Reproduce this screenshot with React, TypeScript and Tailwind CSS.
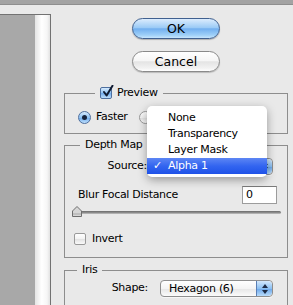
const font = "font-['DejaVu_Sans',sans-serif]";

function AquaStepper() {
  return (
    <span className="flex h-full w-[16px] flex-col items-center justify-center gap-[2px] rounded-r-[4px] border-l border-[#5a7fb5] bg-[linear-gradient(to_bottom,#d4e8fc_0%,#8cc0f2_50%,#6aa6ea_51%,#b9dcfb_100%)]">
      <svg width="6" height="4" viewBox="0 0 6 4">
        <path d="M3 0 L6 4 L0 4 Z" fill="#1d2b45" />
      </svg>
      <svg width="6" height="4" viewBox="0 0 6 4">
        <path d="M0 0 L6 0 L3 4 Z" fill="#1d2b45" />
      </svg>
    </span>
  );
}

function Popup({ value }: { value: string }) {
  return (
    <div className="flex h-[17px] w-[113px] overflow-hidden rounded-[4px] border border-[#8e8e8e] bg-[linear-gradient(to_bottom,#ffffff_0%,#f4f4f4_50%,#e6e6e6_51%,#fbfbfb_100%)] shadow-[0_1px_0_rgba(255,255,255,0.6)]">
      <span className="flex-1 pl-[8px] text-[11px] leading-[15px] tracking-[-0.3px] text-black">{value}</span>
      <AquaStepper />
    </div>
  );
}

function BlueCheckbox() {
  return (
    <span className="relative block h-[12px] w-[12px] rounded-[2px] border border-[#4e6f9e] bg-[linear-gradient(to_bottom,#d6eafd_0%,#8ec2f4_50%,#6ba8ec_51%,#bfe0fc_100%)]">
      <svg className="absolute left-[1px] top-[-3px]" width="12" height="13" viewBox="0 0 12 13">
        <path d="M2 7 L4.6 10.5 L10.5 0.8" fill="none" stroke="#101c33" strokeWidth="2" strokeLinecap="round" strokeLinejoin="round" />
      </svg>
    </span>
  );
}

function WhiteCheckbox() {
  return (
    <span className="block h-[12px] w-[12px] rounded-[2px] border border-[#9a9a9a] bg-[linear-gradient(to_bottom,#ffffff_0%,#f2f2f2_50%,#e2e2e2_51%,#fafafa_100%)]" />
  );
}

function Radio({ checked }: { checked?: boolean }) {
  if (checked) {
    return (
      <span className="flex h-[13px] w-[13px] items-center justify-center rounded-full border border-[#4e6f9e] bg-[linear-gradient(to_bottom,#d6eafd_0%,#8ec2f4_50%,#6ba8ec_51%,#bfe0fc_100%)]">
        <span className="h-[5px] w-[5px] rounded-full bg-[#16233d]" />
      </span>
    );
  }
  return (
    <span className="block h-[13px] w-[13px] rounded-full border border-[#9a9a9a] bg-[linear-gradient(to_bottom,#ffffff_0%,#f2f2f2_50%,#e2e2e2_51%,#fafafa_100%)]" />
  );
}

const menuItems = ["None", "Transparency", "Layer Mask", "Alpha 1"];

export default function App() {
  return (
    <div className={`relative h-[305px] w-[293px] overflow-hidden bg-[#e9e9e9] text-black ${font}`}>
      {/* window top edge */}
      <div className="h-[5px] border-b border-[#8e8e8e] bg-[#a3a3a3]" />

      <div className="flex">
        {/* preview area on the left */}
        <div className="w-[51px] pt-[9px]">
          <div className="flex h-[300px] border-r border-t border-[#727272]">
            <div className="w-[35px] bg-[#a8a8a8]" />
            <div className="w-[15px] bg-[linear-gradient(to_right,#e4e4e4_0%,#ffffff_45%,#f6f6f6_80%,#e2e2e2_100%)]" />
          </div>
        </div>

        {/* controls */}
        <div className="flex-1 pt-[13px]">
          <div className="ml-[81px] flex w-[88px] flex-col gap-[12px]">
            <button className="h-[21px] rounded-full border border-[#40608f] bg-[linear-gradient(to_bottom,#dcecfd_0%,#9ccbf6_45%,#72afef_52%,#9fd0f8_85%,#c8e6fd_100%)] text-[12.5px] leading-[19px] shadow-[0_1px_1px_rgba(0,0,0,0.25)]">
              OK
            </button>
            <button className="h-[21px] rounded-full border border-[#8a8a8a] bg-[linear-gradient(to_bottom,#ffffff_0%,#f6f6f6_45%,#e4e4e4_52%,#f2f2f2_85%,#ffffff_100%)] text-[12.5px] leading-[19px] shadow-[0_1px_1px_rgba(0,0,0,0.2)]">
              Cancel
            </button>
          </div>

          {/* Preview */}
          <fieldset className="ml-[13px] mt-[14px] w-[224px] border border-[#8d8d8d] pb-[9px] pl-[13px]">
            <legend className="ml-[17px] flex h-[14px] items-center gap-[5px] px-[5px] text-[11px] tracking-[-0.3px]">
              <BlueCheckbox />
              <span>Preview</span>
            </legend>
            <div className="mt-[11px] flex h-[13px] items-center">
              <Radio checked />
              <span className="ml-[5px] text-[11px] tracking-[-0.3px]">Faster</span>
              <span className="ml-[11px]">
                <Radio />
              </span>
            </div>
          </fieldset>

          {/* Depth Map */}
          <fieldset className="ml-[13px] mt-[4px] w-[224px] border border-[#8d8d8d] pb-[12px]">
            <legend className="ml-[15px] h-[14px] px-[5px] text-[11px] leading-[14px] tracking-[-0.3px]">Depth Map</legend>
            <div className="mt-[5px] flex h-[18px] items-center">
              <span className="w-[82px] text-right text-[11px] tracking-[-0.3px]">Source:</span>
              <span className="ml-[13px]">
                <Popup value="" />
              </span>
            </div>
            <div className="mt-[11px] flex h-[18px] items-center justify-between pl-[13px] pr-[10px]">
              <span className="text-[11px] tracking-[-0.3px]">Blur Focal Distance</span>
              <span className="h-[18px] w-[35px] border border-[#9c9c9c] border-t-[#7a7a7a] bg-white pl-[3px] text-[11px] leading-[16px] tracking-[-0.3px]">
                0
              </span>
            </div>
            <div className="relative ml-[7px] mt-[2px] h-[11px] w-[209px]">
              <div className="absolute left-[2px] right-0 top-[5px] h-[3px] rounded-full bg-[linear-gradient(to_bottom,#6a6a6a_0%,#8a8a8a_50%,#c4c4c4_100%)]" />
              <svg className="absolute left-0 top-0" width="10" height="11" viewBox="0 0 10 11">
                <path d="M5 0.5 L9.5 5 L9.5 10.5 L0.5 10.5 L0.5 5 Z" fill="#d6d6d6" stroke="#6e6e6e" strokeWidth="1" />
                <path d="M1 8 L9 8" stroke="#a8a8a8" strokeWidth="1" />
              </svg>
            </div>
            <div className="ml-[9px] mt-[16px] flex h-[12px] items-center gap-[6px]">
              <WhiteCheckbox />
              <span className="text-[11px] tracking-[-0.3px]">Invert</span>
            </div>
          </fieldset>

          {/* Iris */}
          <fieldset className="ml-[13px] mt-[5px] w-[224px] border border-[#8d8d8d] pb-[12px]">
            <legend className="ml-[12px] h-[14px] px-[5px] text-[11px] leading-[14px] tracking-[-0.3px]">Iris</legend>
            <div className="mt-[3px] flex h-[17px] items-center">
              <span className="w-[83px] text-right text-[11px] tracking-[-0.3px]">Shape:</span>
              <span className="ml-[12px]">
                <Popup value="Hexagon (6)" />
              </span>
            </div>
          </fieldset>
        </div>
      </div>

      {/* open popup menu */}
      <div className="absolute left-[147px] top-[106px] w-[120px] rounded-[5px] bg-white pb-[3px] pt-[4px] shadow-[0_3px_10px_rgba(0,0,0,0.35)]">
        {menuItems.map((item) => {
          const active = item === "Alpha 1";
          return (
            <div
              key={item}
              className={
                active
                  ? "relative h-[16px] bg-[linear-gradient(to_bottom,#5d86f4_0%,#3365f0_50%,#1f52e8_100%)] pl-[21px] text-[11px] leading-[16px] tracking-[-0.3px] text-white"
                  : "h-[16px] pl-[21px] text-[11px] leading-[16px] tracking-[-0.3px] text-black"
              }
            >
              {active && <span className="absolute left-[6px] top-0 text-[11px]">✓</span>}
              {item}
            </div>
          );
        })}
      </div>
    </div>
  );
}
